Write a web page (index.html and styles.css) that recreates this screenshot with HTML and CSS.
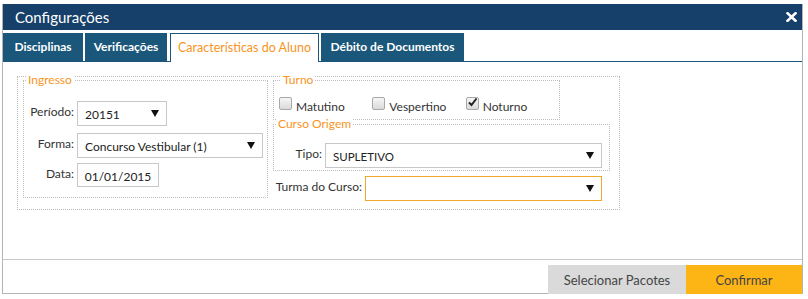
FILE: index.html
```html
<!DOCTYPE html>
<html lang="pt-BR">
<head>
<meta charset="utf-8">
<title>Configurações</title>
<link rel="stylesheet" href="styles.css">
</head>
<body>
<div class="dialog">
  <div class="titlebar">
    <span class="title">Configurações</span>
    <svg class="close" width="11" height="10" viewBox="0 0 11 10"><path d="M1.5 1.2 L9.5 8.8 M9.5 1.2 L1.5 8.8" stroke="#fff" stroke-width="2.6" stroke-linecap="square"/></svg>
  </div>
  <div class="tabs">
    <div class="tab tab-disc">Disciplinas</div>
    <div class="tab tab-verif">Verificações</div>
    <div class="tab tab-carac active">Características do Aluno</div>
    <div class="tab tab-deb">Débito de Documentos</div>
  </div>
  <div class="body">
    <div class="group">
      <fieldset class="fs ingresso">
        <legend>Ingresso</legend>
        <div class="row first">
          <label class="lbl">Período:</label>
          <div class="select w-periodo"><span>20151</span><i class="caret"></i></div>
        </div>
        <div class="row second">
          <label class="lbl">Forma:</label>
          <div class="select w-forma"><span>Concurso Vestibular (1)</span><i class="caret"></i></div>
        </div>
        <div class="row third">
          <label class="lbl">Data:</label>
          <div class="input w-data">01/01/2015</div>
        </div>
      </fieldset>
      <div class="rightcol">
        <fieldset class="fs turno">
          <legend>Turno</legend>
          <div class="checks">
            <span class="check"><span class="cb"></span>Matutino</span>
            <span class="check"><span class="cb"></span>Vespertino</span>
            <span class="check"><span class="cb checked"><svg width="11" height="11" viewBox="0 0 11 11"><path d="M2 5.5 L4.5 8 L9.5 1.5" fill="none" stroke="#222" stroke-width="2"/></svg></span>Noturno</span>
          </div>
        </fieldset>
        <fieldset class="fs curso">
          <legend>Curso Origem</legend>
          <div class="row tipo">
            <label class="lbl lbl-tipo">Tipo:</label>
            <div class="select w-tipo"><span class="caps">SUPLETIVO</span><i class="caret"></i></div>
          </div>
        </fieldset>
        <div class="row turma">
          <label class="lbl lbl-turma">Turma do Curso:</label>
          <div class="select w-turma focus"><span></span><i class="caret"></i></div>
        </div>
      </div>
    </div>
  </div>
  <div class="footer">
    <button class="btn btn-gray">Selecionar Pacotes</button>
    <button class="btn btn-orange">Confirmar</button>
  </div>
</div>
</body>
</html>
```
FILE: styles.css
```css
html, body {
  margin: 0;
  padding: 0;
  background: #fff;
}
body {
  font-family: Lato, "Open Sans", sans-serif;
  color: #333;
}
.dialog {
  margin: 4px 0 0 2px;
  width: 801px;
  height: 290px;
  box-sizing: border-box;
  border: 1px solid #b4b4b4;
  border-top: none;
  display: flex;
  flex-direction: column;
}
.titlebar {
  height: 26px;
  flex: none;
  background: #163f69;
  color: #fff;
  display: flex;
  align-items: center;
  justify-content: space-between;
  padding: 0 5px 0 12px;
}
.title {
  font-size: 15px;
}
.close {
  display: block;
}
.tabs {
  flex: none;
  margin-top: 3px;
  height: 28px;
  display: flex;
  gap: 2px;
  border-bottom: 1px solid #1a577b;
}
.tab {
  background: #1a577b;
  color: #fff;
  font-size: 12px;
  font-weight: 700;
  line-height: 28px;
  text-align: center;
  box-sizing: border-box;
  white-space: nowrap;
}
.tab-disc { width: 80px; }
.tab-verif { width: 82px; }
.tab-carac { width: 149px; }
.tab-deb { width: 143px; }
.tab.active {
  background: #fff;
  color: #f7941e;
  font-weight: 400;
  font-size: 12.5px;
  border: 1px solid #1a577b;
  border-bottom: none;
  line-height: 27px;
  height: 29px;
  margin: 0 0 -1px 1px;
}
.body {
  flex: 1;
  padding: 14px 0 0 14px;
}
.group {
  width: 603px;
  box-sizing: border-box;
  border: 1px dotted #bdbdbd;
  display: flex;
  align-items: flex-start;
  gap: 5px;
  padding: 0 5px 8px 5px;
}
.fs {
  margin: -3px 0 0 0;
  padding: 0;
  border: 1px dotted #bdbdbd;
  min-width: 0;
  box-sizing: border-box;
}
legend {
  font-size: 12px;
  line-height: 12px;
  color: #f7941e;
  background: #fff;
  padding: 0 2px;
  margin-left: 2px;
}
.ingresso {
  width: 245px;
  padding-bottom: 10px;
}
.row {
  display: flex;
  align-items: flex-start;
}
.first { margin-top: 15px; }
.second { margin-top: 7px; }
.third { margin-top: 5px; }
.lbl {
  width: 50px;
  margin-right: 3px;
  text-align: right;
  font-size: 12px;
  line-height: 14px;
  padding-top: 4px;
  color: #333;
  white-space: nowrap;
}
.select {
  height: 25px;
  box-sizing: border-box;
  border: 1px solid #c8c8c8;
  display: flex;
  align-items: center;
  justify-content: space-between;
  padding: 2px 7px 0 7px;
  font-size: 12px;
  color: #222;
}
.caret {
  width: 0;
  height: 0;
  border-left: 4px solid transparent;
  border-right: 4px solid transparent;
  border-top: 7px solid #111;
  margin-top: -2px;
}
.w-periodo { width: 90px; }
.w-forma { width: 186px; }
.input {
  width: 82px;
  height: 24px;
  box-sizing: border-box;
  border: 1px solid #c8c8c8;
  font-size: 12px;
  color: #222;
  text-align: center;
  line-height: 22px;
  padding-top: 2px;
}
.rightcol {
  width: 337px;
  display: flex;
  flex-direction: column;
  align-items: flex-start;
}
.turno {
  width: 287px;
  padding: 0 0 5px 5px;
}
.checks {
  display: flex;
  margin-top: 12px;
  font-size: 12px;
  line-height: 14px;
  color: #333;
}
.check {
  width: 94px;
  white-space: nowrap;
}
.cb {
  display: inline-block;
  width: 13px;
  height: 13px;
  box-sizing: border-box;
  border: 1px solid #a8a8a8;
  border-radius: 2px;
  background: linear-gradient(#f6f6f6, #dadada);
  margin-right: 4px;
  position: relative;
  top: -1px;
}
.cb svg {
  display: block;
  margin: -1px 0 0 0;
}
.curso {
  width: 337px;
  margin-top: -2px;
  padding: 0 0 2px 0;
}
.tipo {
  margin-top: 13px;
}
.lbl-tipo {
  width: 48px;
  margin-right: 3px;
}
.w-tipo { width: 277px; }
.caps { font-size: 11.5px; }
.turma {
  margin-top: 5px;
}
.lbl-turma {
  width: 89px;
  margin-right: 3px;
}
.w-turma { width: 237px; }
.focus { border-color: #f0a82a; }
.footer {
  flex: none;
  border-top: 1px solid #c8c8c8;
  display: flex;
  justify-content: flex-end;
  padding-top: 5px;
  height: 34px;
  box-sizing: border-box;
}
.btn {
  height: 29px;
  border: none;
  margin: 0;
  font-family: Lato, "Open Sans", sans-serif;
  font-size: 13px;
  color: #444;
  padding: 0;
}
.btn-gray {
  background: #dadada;
  width: 138px;
}
.btn-orange {
  background: #fdb515;
  width: 116px;
}
```
